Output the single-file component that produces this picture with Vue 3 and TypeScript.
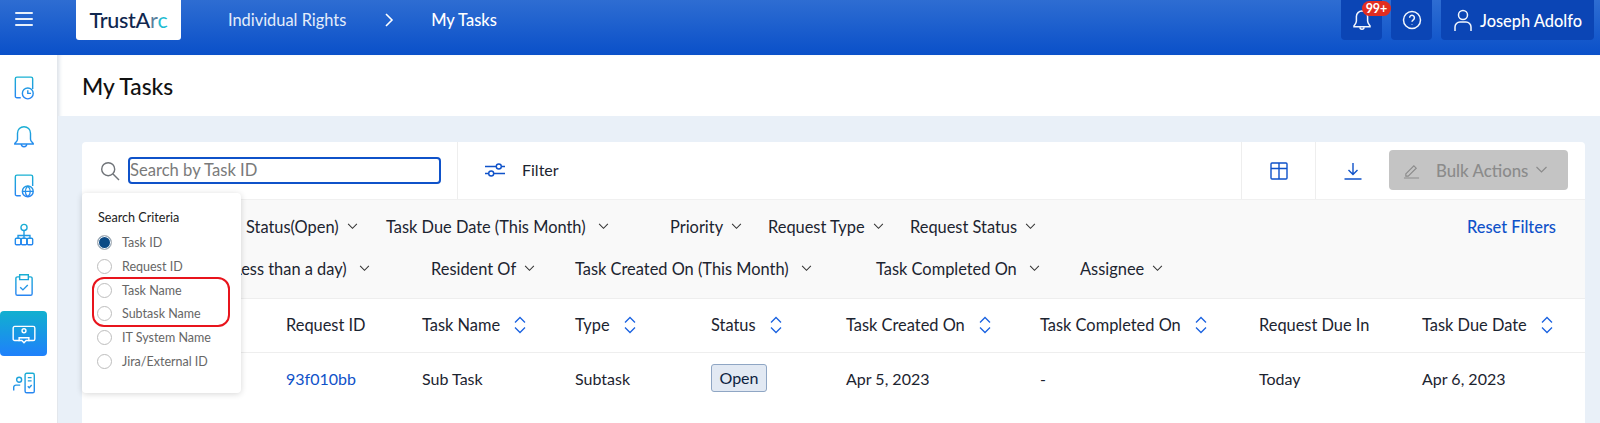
<template>
  <div class="page">
    <svg class="defs" width="0" height="0" aria-hidden="true">
      <defs>
        <linearGradient id="navGrad" gradientUnits="userSpaceOnUse" x1="0" y1="0" x2="0" y2="24">
          <stop offset="0" stop-color="#17b4cf" />
          <stop offset="1" stop-color="#2a80f6" />
        </linearGradient>
      </defs>
    </svg>

    <header class="topbar">
      <button class="burger" aria-label="Menu"><span></span><span></span><span></span></button>
      <div class="logo">TrustA<span class="logo-r">r</span><span class="logo-c">c</span></div>
      <nav class="crumbs">
        <span>Individual Rights</span>
        <svg class="crumb-sep" viewBox="0 0 10 16" width="10" height="16"><path d="M2 2l6 6-6 6" /></svg>
        <strong>My Tasks</strong>
      </nav>
      <div class="top-actions">
        <button class="top-btn square">
          <svg viewBox="0 0 24 24" width="24" height="24"><path d="M12 3a5.6 5.6 0 0 0-5.6 5.6V13c0 2.2-1.2 3.4-2.4 4.8v1h16v-1c-1.2-1.4-2.4-2.6-2.4-4.8V8.600A5.600 5.600 0 0 0 12 3z" /><path d="M10 19.200a2 2 0 0 0 4 0" /></svg>
          <span class="badge">99+</span>
        </button>
        <button class="top-btn square">
          <svg viewBox="0 0 24 24" width="24" height="24"><circle cx="12" cy="12" r="8.500" /><path d="M9.600 9.800a2.400 2.400 0 1 1 3.700 2c-.9.600-1.300 1-1.300 2" /><path d="M12 16v.6" /></svg>
        </button>
        <button class="top-btn user">
          <svg viewBox="0 0 24 24" width="24" height="24"><circle cx="12" cy="7" r="4.500" /><path d="M4 23v-4a5 5 0 0 1 5-5h6a5 5 0 0 1 5 5v4" /></svg>
          <span>Joseph Adolfo</span>
        </button>
      </div>
    </header>

    <div class="layout">
      <aside class="sidebar">
        <a class="nav-item">
          <svg viewBox="0 0 24 24" width="26" height="26"><path d="M9 21H5.500A1.500 1.500 0 0 1 4 19.500V3.500A1.500 1.500 0 0 1 5.500 2h13A1.500 1.500 0 0 1 20 3.500V13" /><circle cx="15.500" cy="17" r="5" /><path d="M15.500 14v3h3" /></svg>
        </a>
        <a class="nav-item">
          <svg viewBox="0 0 24 24" width="26" height="26"><path d="M12 2.500a6 6 0 0 0-6 6V14c0 1.800-1.500 2.600-2.500 4v.5h17V18c-1-1.400-2.500-2.200-2.500-4V8.500a6 6 0 0 0-6-6z" /><path d="M9.500 18.500a2.500 2.500 0 0 0 5 0" /></svg>
        </a>
        <a class="nav-item">
          <svg viewBox="0 0 24 24" width="26" height="26"><path d="M9 21H5.500A1.500 1.500 0 0 1 4 19.500V3.500A1.500 1.500 0 0 1 5.500 2h13A1.500 1.500 0 0 1 20 3.500V12" /><circle cx="15.500" cy="17" r="5" /><path d="M10.500 17h10M15.500 12c-3 3-3 7 0 10M15.500 12c3 3 3 7 0 10" /></svg>
        </a>
        <a class="nav-item">
          <svg viewBox="0 0 24 24" width="26" height="26"><circle cx="12" cy="5" r="2.800" /><path d="M12 8v7M6.500 15v-2.500h11V15" /><rect x="4" y="15" width="5" height="6" rx="1" /><rect x="9.500" y="15" width="5" height="6" rx="1" /><rect x="15" y="15" width="5" height="6" rx="1" /></svg>
        </a>
        <a class="nav-item">
          <svg viewBox="0 0 24 24" width="26" height="26"><path d="M8 4.500H6A1.500 1.500 0 0 0 4.500 6v14A1.500 1.500 0 0 0 6 21.500h12a1.500 1.500 0 0 0 1.500-1.500V6A1.500 1.500 0 0 0 18 4.500h-2" /><path d="M8 2.500h8v4.500H8z" /><path d="M8.500 14l2.500 2.500 4.500-4.500" /></svg>
        </a>
        <a class="nav-item active">
          <svg viewBox="0 0 24 24" width="26" height="26"><path d="M8 18H3.500A1.500 1.500 0 0 1 2 16.500v-10A1.500 1.500 0 0 1 3.500 5h17A1.500 1.500 0 0 1 22 6.500v10a1.500 1.500 0 0 1-1.500 1.500H16" /><circle cx="12" cy="9" r="1.800" /><path d="M7.500 15.500h9v2.500H14l-2 2-2-2H7.500z" /></svg>
        </a>
        <a class="nav-item">
          <svg viewBox="0 0 24 24" width="26" height="26"><circle cx="7.500" cy="9" r="2.300" /><path d="M2.500 19v-3a2 2 0 0 1 2-2h4" /><rect x="13" y="3" width="8.500" height="18" rx="1.500" /><path d="M15.500 7h3.500M15.500 10h3.500M15.500 15l1.300 1.300 2.300-2.500" /></svg>
        </a>
      </aside>

      <main class="main">
        <div class="title-bar"><h1>My Tasks</h1></div>
        <section class="content">
          <div class="card">
            <div class="toolbar">
              <div class="search">
                <svg class="search-icon" viewBox="0 0 20 20" width="20" height="20"><circle cx="8.200" cy="8.200" r="6.500" /><path d="M13 13l6 6" /></svg>
                <div class="search-input">Search by Task ID</div>
              </div>
              <div class="filter-cell">
                <svg class="line-blue" viewBox="0 0 22 18" width="22" height="18"><path d="M1 5.500h11M17.500 5.500H21M1 12.500h3.500M10 12.500h11" /><circle cx="14.800" cy="5.500" r="2.500" /><circle cx="7.200" cy="12.500" r="2.500" /></svg>
                <span>Filter</span>
              </div>
              <div class="tool-cell">
                <svg class="line-blue" viewBox="0 0 18 18" width="18" height="18"><rect x="1" y="1" width="16" height="16" rx="1" /><path d="M1 6.500h16M9 1v16" /></svg>
              </div>
              <div class="tool-cell">
                <svg class="line-blue" viewBox="0 0 18 18" width="18" height="18"><path d="M9 1v11M4.500 8l4.500 4.500L13.500 8M0.500 17h17" /></svg>
              </div>
              <div class="bulk">
                <svg viewBox="0 0 18 18" width="17" height="17"><path d="M3 12.500l8.500-8.500 2.500 2.500-8.500 8.500H3zM1 17h16" /></svg>
                <span>Bulk Actions</span>
                <svg class="bulk-chev" viewBox="0 0 12 8" width="13" height="8"><path d="M1 1l5 5 5-5" /></svg>
              </div>
            </div>

            <div class="filters">
              <div v-for="(row, i) in filterRows" :key="i" class="filter-row">
                <div
                  v-for="item in row"
                  :key="item.label"
                  class="filter-item"
                  :class="{ wide: item.wide }"
                  :style="{ width: item.width + 'px', marginLeft: (item.offset ?? 0) + 'px' }"
                >
                  <span>{{ item.label }}</span>
                  <svg class="chev" viewBox="0 0 12 8" width="11" height="7"><path d="M1 1l5 5 5-5" /></svg>
                </div>
                <a v-if="i === 0" class="reset">Reset Filters</a>
              </div>
            </div>

            <div class="table">
              <div class="tr head">
                <div></div>
                <div v-for="col in columns" :key="col.label" class="th">
                  <span>{{ col.label }}</span>
                  <svg v-if="col.sort" class="sort" viewBox="0 0 14 20" width="14" height="20"><path d="M2 7.500l5-5 5 5M2 12.500l5 5 5-5" /></svg>
                </div>
              </div>
              <div class="tr body">
                <div></div>
                <a class="link">93f010bb</a>
                <div>Sub Task</div>
                <div>Subtask</div>
                <div><span class="status">Open</span></div>
                <div>Apr 5, 2023</div>
                <div>-</div>
                <div>Today</div>
                <div>Apr 6, 2023</div>
              </div>
            </div>
          </div>

          <div class="criteria">
            <div class="criteria-title">Search Criteria</div>
            <label v-for="(opt, i) in criteria" :key="opt" class="radio-row">
              <span class="radio" :class="{ checked: i === 0 }"></span>
              <span>{{ opt }}</span>
            </label>
          </div>
          <div class="annotation"></div>
        </section>
      </main>
    </div>
  </div>
</template>

<script setup lang="ts">
interface FilterItem {
  label: string
  width: number
  offset?: number
  wide?: boolean
}

// the first item of each row sits partly or wholly under the Search Criteria menu
const filterRows: FilterItem[][] = [
  [
    { label: 'Status(Open)', width: 140, offset: 148 },
    { label: 'Task Due Date (This Month)', width: 284, wide: true },
    { label: 'Priority', width: 98 },
    { label: 'Request Type', width: 142 },
    { label: 'Request Status', width: 150 }
  ],
  [
    { label: '(Less than a day)', width: 202, offset: 131, wide: true },
    { label: 'Resident Of', width: 144 },
    { label: 'Task Created On (This Month)', width: 301, wide: true },
    { label: 'Task Completed On', width: 204, wide: true },
    { label: 'Assignee', width: 110 }
  ]
]

const columns = [
  { label: 'Request ID', sort: false },
  { label: 'Task Name', sort: true },
  { label: 'Type', sort: true },
  { label: 'Status', sort: true },
  { label: 'Task Created On', sort: true },
  { label: 'Task Completed On', sort: true },
  { label: 'Request Due In', sort: false },
  { label: 'Task Due Date', sort: true }
]

const criteria = ['Task ID', 'Request ID', 'Task Name', 'Subtask Name', 'IT System Name', 'Jira/External ID']
</script>

<style>
html,
body {
  margin: 0;
  overflow: hidden;
}
</style>

<style scoped>
.page {
  width: 1600px;
  height: 423px;
  overflow: hidden;
  display: flex;
  flex-direction: column;
  background: #fff;
  font-family: Lato, "Open Sans", sans-serif;
  font-size: 16px;
  color: #1c2430;
}

.defs {
  position: absolute;
}

button {
  font-family: inherit;
  border: none;
  cursor: pointer;
}

.topbar {
  flex: 0 0 55px;
  display: flex;
  align-items: flex-start;
  background: linear-gradient(#2e6dd2, #0a50c9);
  color: #fff;
}

.burger {
  width: 18px;
  margin: 12px 0 0 15px;
  padding: 0;
  background: none;
  display: flex;
  flex-direction: column;
  gap: 4px;
}

.burger span {
  height: 2px;
  background: #e8f0fb;
  border-radius: 1px;
}

.logo {
  width: 105px;
  height: 40px;
  margin-left: 43px;
  background: #fff;
  border-radius: 0 0 3px 3px;
  display: flex;
  align-items: center;
  justify-content: center;
  font-size: 21.500px;
  font-weight: 500;
  letter-spacing: -0.3px;
  color: #10274f;
}

.logo-r {
  color: #5a7f9c;
  font-weight: 400;
}

.logo-c {
  color: #1fbcd2;
  font-weight: 400;
}

.crumbs {
  display: flex;
  align-items: center;
  height: 39px;
  margin-left: 47px;
  font-size: 16.400px;
  color: #e4edfa;
}

.crumbs strong {
  font-size: 16.400px;
  font-weight: 500;
  color: #fff;
}

.crumb-sep {
  margin: 0 37px 0 38px;
  fill: none;
  stroke: #fff;
  stroke-width: 1.6;
}

.top-actions {
  margin-left: auto;
  margin-right: 6px;
  display: flex;
  gap: 9px;
}

.top-btn {
  position: relative;
  height: 40px;
  background: #0b45b5;
  border-radius: 0 0 4px 4px;
  color: #fff;
  display: flex;
  align-items: center;
}

.top-btn svg {
  fill: none;
  stroke: #f2f6fd;
  stroke-width: 1.5;
}

.top-btn.square {
  width: 41px;
  justify-content: center;
  padding: 0;
}

.top-btn.user {
  width: 153px;
  padding: 0 0 0 10px;
  gap: 5px;
  font-size: 16.400px;
  font-weight: 500;
}

.badge {
  position: absolute;
  left: 21px;
  top: 1px;
  width: 29px;
  height: 15px;
  background: #e22d20;
  border-radius: 8px;
  font-size: 12.500px;
  font-weight: 700;
  line-height: 15px;
  text-align: center;
  z-index: 1;
}

.layout {
  flex: 1;
  display: flex;
  min-height: 0;
}

.sidebar {
  flex: 0 0 57px;
  box-sizing: border-box;
  padding-top: 10px;
  display: flex;
  flex-direction: column;
  gap: 4.3px;
}

.nav-item {
  width: 47px;
  height: 45px;
  border-radius: 4px;
  display: flex;
  align-items: center;
  justify-content: center;
}

.nav-item svg {
  fill: none;
  stroke: url(#navGrad);
  stroke-width: 1.3;
}

.nav-item.active {
  background: linear-gradient(#11b0cf, #1f80fb);
}

.nav-item.active svg {
  stroke: #fff;
}

.main {
  flex: 1;
  display: flex;
  flex-direction: column;
  min-width: 0;
  border-left: 1px solid #e3e7ec;
  box-shadow: inset 3px 0 4px -2px #d6dde6;
}

.title-bar {
  flex: 0 0 61px;
  box-sizing: border-box;
  padding-left: 24px;
  display: flex;
  align-items: center;
}

h1 {
  margin: 0;
  font-size: 22.800px;
  font-weight: 500;
  color: #111;
}

.content {
  position: relative;
  flex: 1;
  box-sizing: border-box;
  padding: 26px 15px 0 24px;
  background: #e9f0f8;
}

.card {
  height: 100%;
  background: #fff;
  border-radius: 4px 4px 0 0;
}

.toolbar {
  height: 58px;
  display: flex;
  border-bottom: 1px solid #f0f0f0;
  box-sizing: border-box;
}

.search {
  width: 376px;
  box-sizing: border-box;
  padding: 0 16px 0 18px;
  display: flex;
  align-items: center;
  gap: 8px;
  border-right: 1px solid #eeeeee;
}

.search-icon {
  flex: none;
  fill: none;
  stroke: #6f7378;
  stroke-width: 1.4;
}

.search-input {
  flex: 1;
  height: 27px;
  box-sizing: border-box;
  border: 2px solid #0f52c9;
  border-radius: 4px;
  font-size: 16.600px;
  line-height: 22px;
  color: #7a7a7a;
}

.filter-cell {
  flex: 1;
  display: flex;
  align-items: center;
  gap: 16px;
  padding: 0 0 2px 26px;
}

.line-blue {
  flex: none;
  fill: none;
  stroke: #0f52c9;
  stroke-width: 1.4;
}

.tool-cell {
  width: 73px;
  display: flex;
  align-items: center;
  justify-content: center;
  border-left: 1px solid #eeeeee;
}

.bulk {
  width: 179px;
  height: 40px;
  margin: 8px 17px 0 0;
  box-sizing: border-box;
  padding-left: 14px;
  background: #c4c4c4;
  border-radius: 4px;
  display: flex;
  align-items: center;
  gap: 16px;
  color: #8b8b8b;
  font-size: 16.800px;
  font-weight: 500;
}

.bulk svg {
  fill: none;
  stroke: #8b8b8b;
  stroke-width: 1.2;
}

.bulk .bulk-chev {
  margin-left: -9px;
}

.filters {
  height: 99px;
  box-sizing: border-box;
  padding: 15px 29px 0 16px;
  background: #f9f9f9;
  border-bottom: 1px solid #eeeeee;
  display: flex;
  flex-direction: column;
  gap: 20px;
  font-size: 16.400px;
}

.filter-row {
  display: flex;
  align-items: center;
  height: 22px;
}

.filter-item {
  flex: none;
  display: flex;
  align-items: center;
  gap: 8px;
  white-space: nowrap;
}

.filter-item.wide {
  gap: 12px;
}

.chev {
  flex: none;
  fill: none;
  stroke: #333;
  stroke-width: 1.2;
}

.reset {
  margin-left: auto;
  font-size: 16.400px;
  color: #0f52c9;
  font-weight: 500;
}

.tr {
  display: grid;
  grid-template-columns: 204px 136px 153px 136px 135px 194px 219px 163px 1fr;
  align-items: center;
}

.tr.head {
  height: 54px;
  padding-bottom: 2px;
  font-size: 16.400px;
  border-bottom: 1px solid #eeeeee;
  box-sizing: border-box;
}

.th {
  display: flex;
  align-items: center;
  gap: 13px;
}

.sort {
  fill: none;
  stroke: #1a62e0;
  stroke-width: 1.3;
}

.tr.body {
  height: 50px;
}

.link {
  color: #0f52c9;
}

.status {
  display: inline-block;
  padding: 3px 7.500px 4px;
  background: #e2e9f3;
  border: 1px solid #8fa6c4;
  border-radius: 3px;
  font-size: 16px;
  color: #0d2340;
}

.criteria {
  position: absolute;
  left: 24px;
  top: 77px;
  width: 159px;
  height: 200px;
  box-sizing: border-box;
  padding: 17px 0 0 15px;
  background: #fff;
  border-radius: 4px;
  box-shadow: 0 1px 6px rgba(0, 0, 0, 0.16);
  z-index: 2;
}

.criteria-title {
  font-size: 12.600px;
  line-height: 16px;
  margin-bottom: 5px;
  padding-left: 1px;
  color: #222;
}

.radio-row {
  height: 23.700px;
  display: flex;
  align-items: center;
  gap: 10px;
  font-size: 12.500px;
  color: #666;
}

.radio {
  width: 15px;
  height: 15px;
  box-sizing: border-box;
  border: 1px solid #bdbdbd;
  border-radius: 50%;
  background: #fff;
}

.radio.checked {
  background: #0a4a85;
  box-shadow: inset 0 0 0 1px #fff;
}

.annotation {
  position: absolute;
  left: 34px;
  top: 161px;
  width: 138px;
  height: 50px;
  box-sizing: border-box;
  border: 2.500px solid #e8141c;
  border-radius: 12px;
  z-index: 3;
}
</style>
